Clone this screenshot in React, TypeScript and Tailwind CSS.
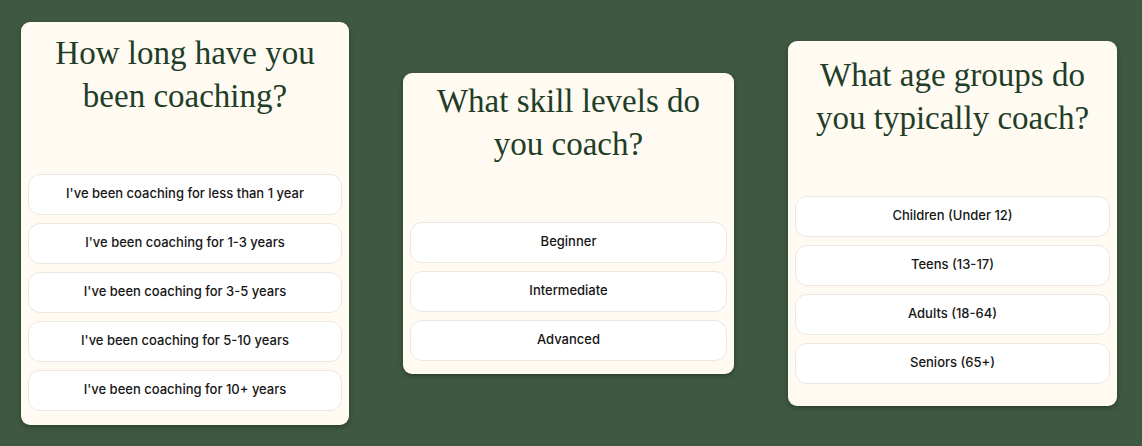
import React from "react";

type CardProps = {
  lines: string[];
  options: string[];
  pt: string;
  pb: string;
  w: string;
};

function Card({ lines, options, pt, pb, w }: CardProps) {
  return (
    <div
      className={`flex flex-col rounded-[9px] bg-[#fffaf2] px-[7px] shadow-[0_2px_5px_rgba(0,0,0,0.3)] ${pt} ${pb} ${w}`}
    >
      <h2
        className="mb-[56px] text-center text-[33px] leading-[43px] text-[#223d27]"
        style={{ fontFamily: '"Liberation Serif", "DejaVu Serif", serif' }}
      >
        {lines.map((l, i) => (
          <React.Fragment key={i}>
            {l}
            {i < lines.length - 1 && <br />}
          </React.Fragment>
        ))}
      </h2>
      <div className="flex flex-col gap-2">
        {options.map((o) => (
          <button
            key={o}
            className="flex h-[41px] items-center justify-center rounded-[12px] border border-[#ece8e1] bg-white text-[13px] font-medium text-[#161616]"
            style={{ fontFamily: 'Inter, "Noto Sans", sans-serif' }}
          >
            {o}
          </button>
        ))}
      </div>
    </div>
  );
}

export default function App() {
  return (
    <div className="flex h-[446px] w-full items-center justify-center gap-[54px] bg-[#3e593f] pr-[4px]">
      <Card
        w="w-[328px]"
        pt="pt-[10px]"
        pb="pb-[14px]"
        lines={["How long have you", "been coaching?"]}
        options={[
          "I've been coaching for less than 1 year",
          "I've been coaching for 1-3 years",
          "I've been coaching for 3-5 years",
          "I've been coaching for 5-10 years",
          "I've been coaching for 10+ years",
        ]}
      />
      <Card
        w="w-[331px]"
        pt="pt-[7px]"
        pb="pb-[13px]"
        lines={["What skill levels do", "you coach?"]}
        options={["Beginner", "Intermediate", "Advanced"]}
      />
      <Card
        w="w-[329px]"
        pt="pt-[13px]"
        pb="pb-[22px]"
        lines={["What age groups do", "you typically coach?"]}
        options={["Children (Under 12)", "Teens (13-17)", "Adults (18-64)", "Seniors (65+)"]}
      />
    </div>
  );
}
